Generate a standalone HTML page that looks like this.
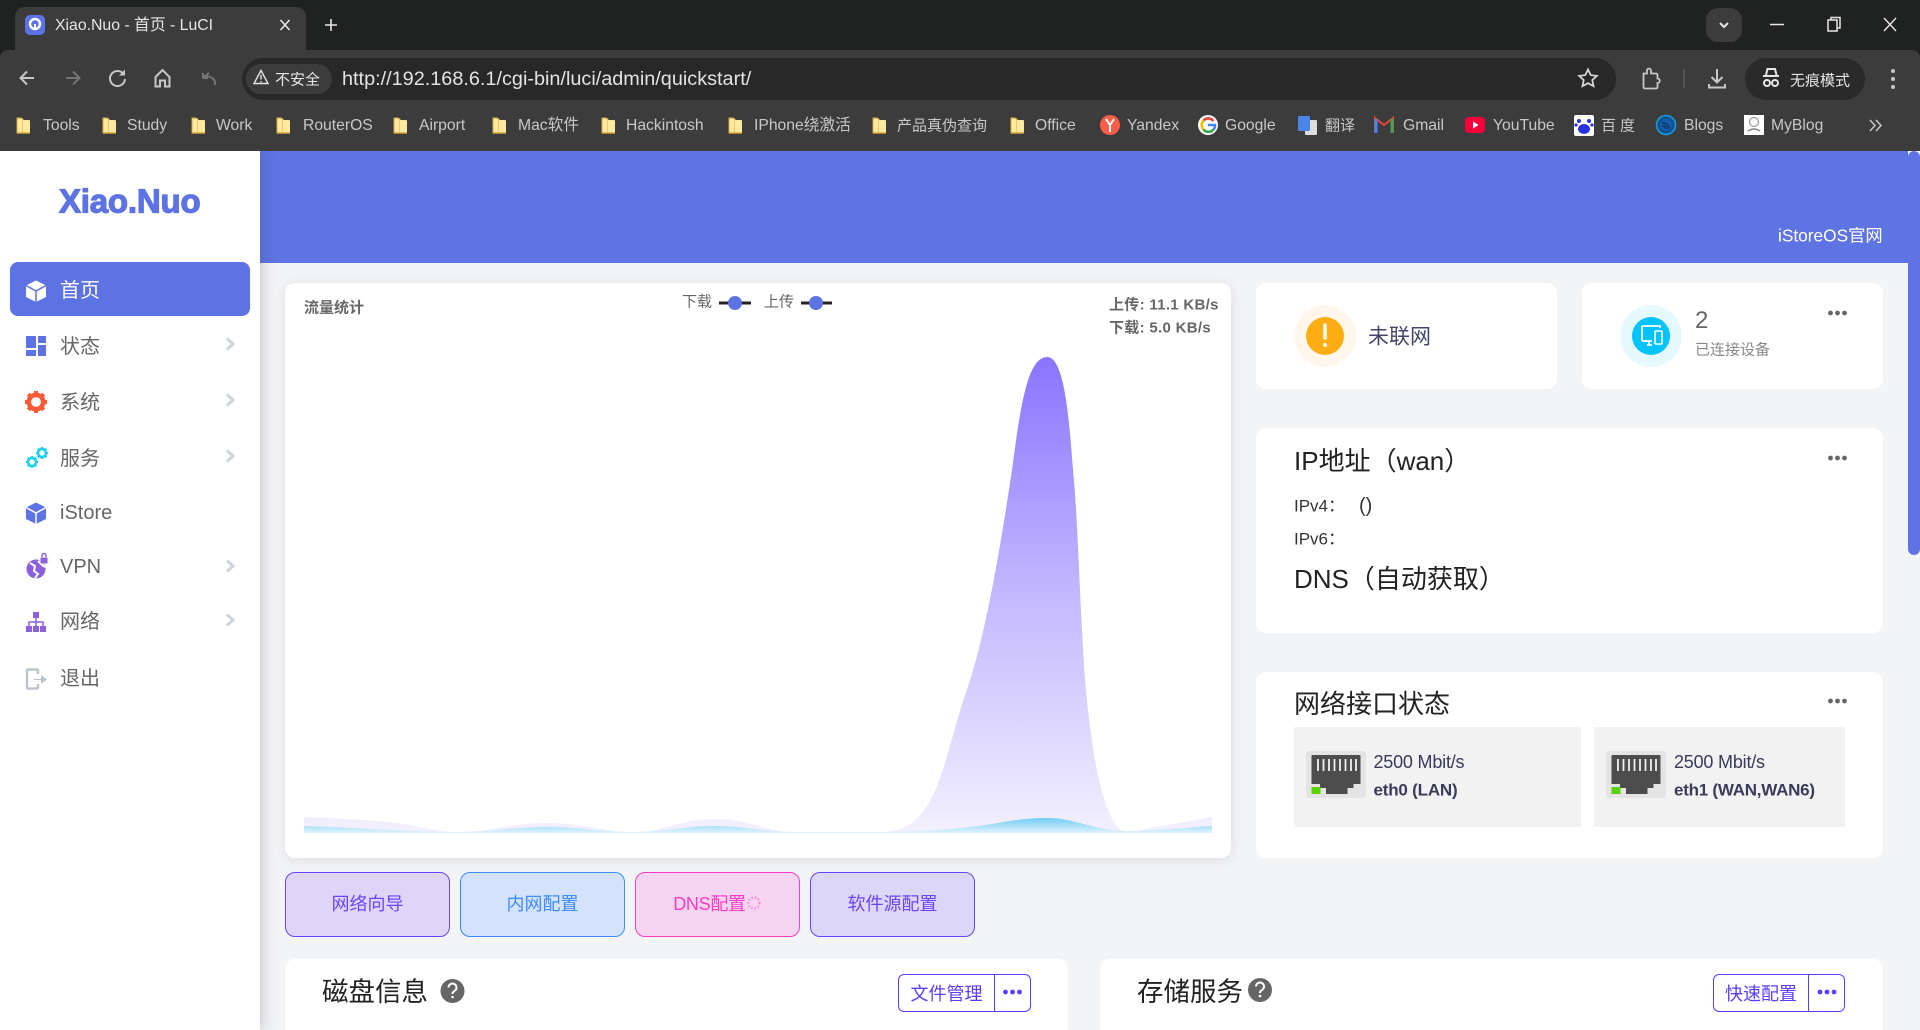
<!DOCTYPE html>
<html lang="zh"><head><meta charset="utf-8"><title>Xiao.Nuo - 首页 - LuCI</title>
<style>
*{box-sizing:border-box;margin:0;padding:0}
html,body{width:1920px;height:1030px;overflow:hidden;background:#f3f4f6;font-family:"Liberation Sans","Noto Sans CJK SC",sans-serif}
#root{position:relative;width:1920px;height:1030px;overflow:hidden}
.a{position:absolute}
.t{position:absolute;white-space:nowrap;line-height:1;transform:translateY(-50%)}
.card{position:absolute;background:#fff;border-radius:10px}
.bm{color:#c8c8c8;font-size:15.7px;top:126px}
.nav{font-size:20px;color:#666;left:60px}
.h{font-size:26px;color:#222}
.btn{position:absolute;top:872px;height:65px;width:165px;border-radius:10px;border:1px solid;font-size:18px;display:flex;align-items:center;justify-content:center;padding-bottom:4px}
.sb{position:absolute;top:974px;height:38px;border:1px solid #5c3dff;border-radius:6px;background:#fff;color:#5c3dff;font-size:18px;display:flex}
.sb span{display:flex;align-items:center;justify-content:center}
</style></head><body><div id="root">
<!-- browser chrome -->
<div class="a" style="left:0;top:0;width:1920px;height:151px;background:#202221"></div>
<div class="a" style="left:0;top:50px;width:1920px;height:101px;background:#3c3c3c;border-radius:8px 8px 0 0"></div>
<div class="a" style="left:15px;top:7px;width:291px;height:44px;background:#3c3c3c;border-radius:10px 10px 0 0"></div>
<div class="a" style="left:1706px;top:8px;width:36px;height:34px;background:#3c3c3c;border-radius:12px"></div>
<div class="a" style="left:242px;top:58px;width:1374px;height:42px;background:#282828;border-radius:21px"></div>
<div class="a" style="left:246px;top:64px;width:86px;height:30px;background:#3c3c3c;border-radius:15px"></div>
<div class="a" style="left:1745px;top:58px;width:120px;height:42px;background:#2a2a2a;border-radius:21px"></div>
<div class="t" style="left:55px;top:26px;font-size:15.8px;color:#e6e6e6">Xiao.Nuo - 首页 - LuCI</div>
<div class="t" style="left:275px;top:80px;font-size:15px;color:#e6e6e6">不安全</div>
<div class="t" style="left:342px;top:80px;font-size:19.85px;color:#e3e3e3">http://192.168.6.1/cgi-bin/luci/admin/quickstart/</div>
<div class="t" style="left:1790px;top:81px;font-size:15px;color:#e6e6e6">无痕模式</div>
<div class="t bm" style="left:43px">Tools</div><div class="t bm" style="left:127px">Study</div><div class="t bm" style="left:216px">Work</div>
<div class="t bm" style="left:303px">RouterOS</div><div class="t bm" style="left:419px">Airport</div><div class="t bm" style="left:518px">Mac软件</div>
<div class="t bm" style="left:626px">Hackintosh</div><div class="t bm" style="left:754px">IPhone绕激活</div><div class="t bm" style="left:897px;font-size:15px">产品真伪查询</div>
<div class="t bm" style="left:1035px">Office</div><div class="t bm" style="left:1127px">Yandex</div><div class="t bm" style="left:1225px">Google</div>
<div class="t bm" style="left:1325px;font-size:15px">翻译</div><div class="t bm" style="left:1403px">Gmail</div><div class="t bm" style="left:1493px">YouTube</div>
<div class="t bm" style="left:1601px;letter-spacing:4px;font-size:15px">百度</div><div class="t bm" style="left:1684px">Blogs</div><div class="t bm" style="left:1771px">MyBlog</div>

<!-- page -->
<div class="a" style="left:260px;top:151px;width:1660px;height:112px;background:#5f74e3"></div>
<div class="a" style="left:1908px;top:151px;width:12px;height:6px;background:#fff"></div>
<div class="a" style="left:1908px;top:151px;width:12px;height:404px;background:#5f74e2;border-radius:6px"></div>
<div class="a" style="left:0;top:151px;width:260px;height:879px;background:#fff;box-shadow:2px 0 14px rgba(60,65,80,.25)"></div>
<div class="t" style="left:59px;top:201px;font-size:33px;font-weight:bold;color:#5d73e3;letter-spacing:-.2px;-webkit-text-stroke:1.2px #5d73e3">Xiao.Nuo</div>
<div class="a" style="left:10px;top:262px;width:240px;height:54px;background:#5d73e3;border-radius:8px"></div>
<div class="t nav" style="top:291px;color:#fff">首页</div>
<div class="t nav" style="top:347px">状态</div>
<div class="t nav" style="top:403px">系统</div>
<div class="t nav" style="top:459px">服务</div>
<div class="t nav" style="top:513px">iStore</div>
<div class="t nav" style="top:567px">VPN</div>
<div class="t nav" style="top:622px">网络</div>
<div class="t nav" style="top:679px">退出</div>
<div class="t" style="left:1778px;top:236px;font-size:17.3px;color:#fff">iStoreOS官网</div>

<div class="card" style="left:285px;top:283px;width:946px;height:575px;box-shadow:0 2px 12px rgba(60,65,90,.12)"></div>
<div class="t" style="left:304px;top:308px;font-size:15px;font-weight:bold;color:#666">流量统计</div>
<div class="t" style="left:682px;top:302px;font-size:15px;color:#666">下载</div>
<div class="t" style="left:764px;top:302px;font-size:15px;color:#666">上传</div>
<div class="t" style="left:1109px;top:305px;font-size:15px;font-weight:bold;color:#666;letter-spacing:.3px">上传: 11.1 KB/s</div>
<div class="t" style="left:1109px;top:328px;font-size:15px;font-weight:bold;color:#666;letter-spacing:.3px">下载: 5.0 KB/s</div>

<div class="card" style="left:1256px;top:283px;width:301px;height:106px"></div>
<div class="card" style="left:1582px;top:283px;width:301px;height:106px"></div>
<div class="t" style="left:1368px;top:337px;font-size:21px;color:#45456a">未联网</div>
<div class="t" style="left:1695px;top:321px;font-size:24px;color:#666">2</div>
<div class="t" style="left:1695px;top:350px;font-size:15px;color:#888">已连接设备</div>

<div class="card" style="left:1256px;top:428px;width:627px;height:205px"></div>
<div class="t h" style="left:1294px;top:461px">IP地址（wan）</div>
<div class="t" style="left:1294px;top:506px;font-size:17px;color:#333">IPv4：</div>
<div class="t" style="left:1359px;top:506px;font-size:20px;color:#333">()</div>
<div class="t" style="left:1294px;top:539px;font-size:17px;color:#333">IPv6：</div>
<div class="t h" style="left:1294px;top:579px">DNS（自动获取）</div>

<div class="card" style="left:1256px;top:672px;width:627px;height:186px"></div>
<div class="t h" style="left:1294px;top:704px">网络接口状态</div>
<div class="a" style="left:1294px;top:727px;width:287px;height:100px;background:#f2f2f2"></div>
<div class="a" style="left:1594px;top:727px;width:251px;height:100px;background:#f2f2f2"></div>
<div class="t" style="left:1373.5px;top:762px;font-size:18px;color:#3a3a5a;letter-spacing:-.2px">2500 Mbit/s</div>
<div class="t" style="left:1373.5px;top:790px;font-size:17px;font-weight:bold;color:#3a3a5a;letter-spacing:-.2px">eth0 (LAN)</div>
<div class="t" style="left:1674px;top:762px;font-size:18px;color:#3a3a5a;letter-spacing:-.2px">2500 Mbit/s</div>
<div class="t" style="left:1674px;top:790px;font-size:17px;font-weight:bold;color:#3a3a5a;letter-spacing:-.25px">eth1 (WAN,WAN6)</div>

<div class="btn" style="left:285px;background:#ded6f9;border-color:#6a44ff;color:#6a44ff">网络向导</div>
<div class="btn" style="left:460px;background:#d4e3fb;border-color:#3d8bff;color:#3d8bff">内网配置</div>
<div class="btn" style="left:635px;background:#f6d5f0;border-color:#ff3bc6;color:#ff3bc6;padding-right:16px;letter-spacing:-.3px">DNS配置</div>
<div class="btn" style="left:810px;background:#dcd6f8;border-color:#6a44ff;color:#6a44ff">软件源配置</div>

<div class="card" style="left:285px;top:959px;width:783px;height:90px"></div>
<div class="card" style="left:1100px;top:959px;width:783px;height:90px"></div>
<div class="t h" style="left:322px;top:992px;font-size:26.5px">磁盘信息</div>
<div class="t h" style="left:1137px;top:992px;font-size:26.5px">存储服务</div>
<div class="sb" style="left:898px;width:133px"><span style="width:96px;border-right:1px solid #5c3dff">文件管理</span></div>
<div class="sb" style="left:1713px;width:132px"><span style="width:95px;border-right:1px solid #5c3dff">快速配置</span></div>

<!-- icons and shapes -->
<svg class="a" style="left:0;top:0" width="1920" height="1030" viewBox="0 0 1920 1030" fill="none">
<defs>
<linearGradient id="pg" gradientUnits="userSpaceOnUse" x1="0" y1="357" x2="0" y2="833"><stop offset="0" stop-color="#8a74ff"/><stop offset=".5" stop-color="#c3b8ff"/><stop offset="1" stop-color="#f3f0fe"/></linearGradient>
<linearGradient id="bg" gradientUnits="userSpaceOnUse" x1="0" y1="818" x2="0" y2="833"><stop offset="0" stop-color="#6fcdf5"/><stop offset="1" stop-color="#e0f2fe"/></linearGradient>
<g id="fold"><path d="M0 1h4l2 1v14H0z" fill="#ffe9a0" stroke="#d8a93a"/><path d="M6 3h6a1 1 0 0 1 1 1v12H6z" fill="#ffe9a0"/><path d="M0 16h13" stroke="#d8a93a" stroke-width="1.4"/></g>
<g id="chev"><path d="M-3 -5.5 3 0-3 5.5" stroke="#ced4da" stroke-width="3"/></g>
<g id="dots"><circle cx="-7" cy="0" r="2.4"/><circle cx="0" cy="0" r="2.4"/><circle cx="7" cy="0" r="2.4"/></g>
<g id="gear"><circle r="7.2" stroke-width="4.6"/><path d="M0 -11V-8M0 8V11M-11 0H-8M8 0H11M-7.8 -7.8-5.7 -5.7M7.8 7.8 5.700 5.700M7.8 -7.800 5.700 -5.700M-7.800 7.800-5.700 5.700" stroke-width="4"/></g>
<g id="cube"><path d="M0 -10.5 10 -5.5V6L0 11-10 6V-5.500z"/></g>
<g id="rj"><rect x="0" y="0" width="60" height="47" rx="3" fill="#e4e4e4"/><path d="M5.5 5a1 1 0 0 1 1-1h47a1 1 0 0 1 1 1v28h-7v4h-6v6H20v-6h-6v-4H5.500z" fill="#4d4d4d"/><path d="M12 8v12M17.500 8v12M23 8v12M28.500 8v12M34 8v12M39.500 8v12M45 8v12M50 8v12" stroke="#f0f0f0" stroke-width="1.800"/><rect x="5.500" y="36" width="9" height="7" fill="#5ad300"/></g>
</defs>
<!-- tab -->
<rect x="25" y="15" width="20" height="20" rx="5" fill="#5c73e7"/><circle cx="35" cy="24" r="5" stroke="#fff" stroke-width="2.400"/><path d="M35 24v6" stroke="#fff" stroke-width="2"/>
<path d="M280.500 20l9 10M289.500 20l-9 10M331 19v12M325 25h12" stroke="#e6e6e6" stroke-width="1.600"/>
<path d="M1720 23l4 4 4-4" stroke="#e6e6e6" stroke-width="2"/>
<path d="M1770 24.500h14" stroke="#e6e6e6" stroke-width="1.500"/>
<path d="M1828 20h9v11h-9zM1831 20v-2.500h9v10.500h-3" stroke="#e6e6e6" stroke-width="1.500"/>
<path d="M1884 18l12 13M1896 18l-12 13" stroke="#e6e6e6" stroke-width="1.400"/>
<!-- toolbar -->
<path d="M34 78H21M27 71.500 20.500 78l6.500 6.500" stroke="#c7c7c7" stroke-width="2"/>
<path d="M66 78h13M73 71.500l6.500 6.500-6.500 6.500" stroke="#757575" stroke-width="2"/>
<path d="M123.500 74a7.500 7.500 0 1 0 1.500 5" stroke="#c7c7c7" stroke-width="2"/><path d="M125 69.500v6h-6z" fill="#c7c7c7"/>
<path d="M155.500 77l7-7 7 7v9.500h-4.500v-6h-5v6h-4.500z" stroke="#c7c7c7" stroke-width="2"/>
<path d="M203 78l6-5M203 78h5M203 78v-5M204 78a7 7 0 0 1 11 7" stroke="#757575" stroke-width="2"/>
<path d="M261 70.500l7 13h-14zM261 75v4.500M261 81v1.200" stroke="#e6e6e6" stroke-width="1.400"/>
<path d="M1588 69.500l2.700 5.600 6.100.8-4.500 4.200 1.200 6.100-5.500-3-5.500 3 1.200-6.100-4.500-4.200 6.100-.8z" stroke="#d4d4d4" stroke-width="1.800"/>
<path d="M1643.500 73.500h3.500v-3a2 2 0 0 1 4 0v3h5a1.500 1.500 0 0 1 1.500 1.500v3.500a2 2 0 0 1 0 4.500v4a1.500 1.500 0 0 1-1.500 1.500h-11a1.500 1.500 0 0 1-1.500-1.500z" stroke="#c7c7c7" stroke-width="1.800"/>
<path d="M1684 69v19" stroke="#5a5a5a" stroke-width="1.500"/>
<path d="M1717 69v13M1711.500 77l5.500 5.500 5.500-5.500M1709 84v3.500h16V84" stroke="#c7c7c7" stroke-width="2"/>
<path d="M1763 76h16M1766 75l1.500-6h7.500l1.500 6" stroke="#e6e6e6" stroke-width="2"/><circle cx="1767" cy="83" r="3" stroke="#e6e6e6" stroke-width="2"/><circle cx="1775" cy="83" r="3" stroke="#e6e6e6" stroke-width="2"/>
<circle cx="1893" cy="71" r="2" fill="#c7c7c7"/><circle cx="1893" cy="79" r="2" fill="#c7c7c7"/><circle cx="1893" cy="87" r="2" fill="#c7c7c7"/>
<!-- bookmarks -->
<use href="#fold" x="17" y="117"/><use href="#fold" x="103" y="117"/><use href="#fold" x="192" y="117"/><use href="#fold" x="277" y="117"/><use href="#fold" x="394" y="117"/><use href="#fold" x="493" y="117"/><use href="#fold" x="602" y="117"/><use href="#fold" x="729" y="117"/><use href="#fold" x="873" y="117"/><use href="#fold" x="1011" y="117"/>
<circle cx="1110" cy="125" r="10" fill="#fc5d49"/><path d="M1106 119l4 6 4-6M1110 125v7" stroke="#fff" stroke-width="2"/>
<circle cx="1208" cy="125" r="10" fill="#fff"/><path d="M1213.500 121a6.500 6.500 0 0 0-10-.5" stroke="#ea4335" stroke-width="2.600"/><path d="M1203.500 120.500a6.500 6.500 0 0 0 0 9" stroke="#fbbc05" stroke-width="2.600"/><path d="M1203.500 129.500a6.500 6.500 0 0 0 10 0" stroke="#34a853" stroke-width="2.600"/><path d="M1208 125h7a6.500 6.500 0 0 1-1.500 4.500" stroke="#4285f4" stroke-width="2.600"/>
<rect x="1305" y="120" width="12" height="15" rx="1" fill="#ddd"/><rect x="1298" y="116" width="12" height="15" rx="1" fill="#4a86e8"/>
<path d="M1375 133v-15l9 7 9-7v15" stroke="#ea4335" stroke-width="2"/><path d="M1376 133v-14" stroke="#4285f4" stroke-width="3"/><path d="M1392 133v-14" stroke="#34a853" stroke-width="3"/>
<rect x="1465" y="117" width="20" height="16" rx="4" fill="#f8003a"/><path d="M1473 121.500l5.500 3.500-5.500 3.500z" fill="#fff"/>
<rect x="1574" y="115" width="20" height="21" rx="2" fill="#fff"/><ellipse cx="1584" cy="129" rx="6" ry="5" fill="#2932e1"/><circle cx="1579" cy="121" r="2" fill="#2932e1"/><circle cx="1589" cy="121" r="2" fill="#2932e1"/><circle cx="1576" cy="125" r="1.600" fill="#2932e1"/><circle cx="1592" cy="125" r="1.600" fill="#2932e1"/>
<circle cx="1666" cy="125" r="9.500" stroke="#16a0e0" stroke-width="1.500" fill="#14508c"/><circle cx="1666" cy="125" r="6" fill="#0f5fb0"/><path d="M1662 123a6 6 0 0 1 7 6M1662 126a3 3 0 0 1 4 3" stroke="#1a2c55" stroke-width="1.400"/>
<rect x="1744" y="115" width="20" height="20" fill="#fff"/><circle cx="1754" cy="122" r="4.500" stroke="#999" stroke-width="1.200"/><path d="M1748 131q6-4 12 0" stroke="#888" stroke-width="1.500"/>
<path d="M1870 120l5 5.500-5 5.500M1876 120l5 5.500-5 5.500" stroke="#c7c7c7" stroke-width="1.500"/>
<!-- sidebar icons -->
<g transform="translate(36 291)"><use href="#cube" fill="#fff"/><path d="M-10 -5.500 0 0 10 -5.500M0 0V11" stroke="#5d73e3" stroke-width="1.500"/></g>
<g fill="#5d73e3"><rect x="26" y="336" width="10" height="12"/><rect x="38" y="336" width="8" height="7"/><rect x="26" y="350" width="10" height="6"/><rect x="38" y="345" width="8" height="11"/></g>
<g transform="translate(36 402)" stroke="#ff5a36"><use href="#gear"/></g>
<g transform="translate(32 462) scale(.55)" stroke="#1cd0ee"><use href="#gear"/></g>
<g transform="translate(42 453) scale(.55)" stroke="#1cd0ee"><use href="#gear"/></g>
<g transform="translate(36 513)"><use href="#cube" fill="#5d73e3"/><path d="M-10 -5.500 0 0 10 -5.500M0 0V11" stroke="#fff" stroke-width="1.500"/></g>
<circle cx="36" cy="569" r="9.500" fill="#8b60dd"/><path d="M30 563l5 3-1 5 4 3-3 4M38 561l4 4 3 2" stroke="#fff" stroke-width="2"/><rect x="40" y="557" width="8" height="7" rx="1" fill="#8b60dd" stroke="#fff"/><path d="M42 557v-1.500a2 2 0 0 1 4 0V557" stroke="#8b60dd" stroke-width="1.500"/>
<g fill="#8b60dd"><rect x="33" y="612" width="6" height="6"/><rect x="26" y="626" width="6" height="6"/><rect x="33" y="626" width="6" height="6"/><rect x="40" y="626" width="6" height="6"/></g><path d="M36 618v8M29 626v-4h14v4" stroke="#8b60dd" stroke-width="1.500"/>
<path d="M38 674v-3.500a1 1 0 0 0-1-1H28a1 1 0 0 0-1 1v17a1 1 0 0 0 1 1h9a1 1 0 0 0 1-1V684" stroke="#bcc3cb" stroke-width="2.400"/><path d="M34 679h7v-4l6 4.500-6 4.500v-4h-7z" fill="#bcc3cb"/>
<use href="#chev" x="230" y="344"/><use href="#chev" x="230" y="400"/><use href="#chev" x="230" y="456"/><use href="#chev" x="230" y="566"/><use href="#chev" x="230" y="620"/>
<!-- chart -->
<path d="M304 817C350 819 395 821 420 827C435 830 445 832 460 832C490 832 510 823 547 823C585 823 600 832 634 832C665 832 680 819 715 819C750 819 765 832 795 832L880 832C905 832 920 822 933 795C945 770 952 735 965 695C985 640 1000 550 1012 470C1020 410 1027 357 1047 357C1062 357 1068 400 1073 470C1078 520 1080 610 1085 680C1092 760 1105 832 1128 832L1212 817L1212 833L304 833Z" fill="url(#pg)"/>
<path d="M304 826C380 829 420 832 460 832C490 832 515 827 547 827C580 827 600 832 634 832C665 832 685 826 715 826C745 826 765 832 795 832L880 832C930 832 960 828 980 826C1000 823 1020 818 1047 818C1075 818 1095 831 1128 831C1160 831 1190 827 1212 826L1212 833L304 833Z" fill="url(#bg)"/>
<path d="M719 303h32M801 303h31" stroke="#222" stroke-width="3"/><circle cx="735" cy="303" r="7" fill="#5d73e3"/><circle cx="816" cy="303" r="7" fill="#5d73e3"/>
<!-- status circles -->
<circle cx="1325" cy="336" r="31" fill="#fff7ec"/><circle cx="1325" cy="336" r="19" fill="#ffad14"/><path d="M1325 325v13" stroke="#fff" stroke-width="3.500" stroke-linecap="round"/><circle cx="1325" cy="345" r="2" fill="#fff"/>
<circle cx="1651" cy="336" r="31" fill="#e6f9ff"/><circle cx="1651" cy="336" r="19" fill="#00c3ff"/>
<path d="M1660 328v-2h-17a1 1 0 0 0-1 1v13a1 1 0 0 0 1 1h9M1647 345h5M1649 341v4" stroke="#fff" stroke-width="1.800"/><rect x="1655" y="331" width="7" height="13" rx="1" stroke="#fff" stroke-width="1.600"/>
<g fill="#666"><use href="#dots" x="1837.500" y="313"/><use href="#dots" x="1837.500" y="458"/><use href="#dots" x="1837.500" y="701"/></g>
<use href="#rj" x="1306" y="751"/><use href="#rj" x="1606" y="751"/>
<!-- spinner -->
<circle cx="754" cy="903" r="5.500" stroke="#ff8fdc" stroke-width="2.500" stroke-dasharray="1.500 1.800"/>
<!-- help -->
<circle cx="452.500" cy="991" r="12" fill="#666"/><circle cx="1260" cy="990" r="12" fill="#666"/>
<path d="M448.500 987.500a4 4 0 1 1 6 3.500q-2 1-2 3M1256 986.500a4 4 0 1 1 6 3.500q-2 1-2 3" stroke="#fff" stroke-width="2"/><circle cx="452.500" cy="997" r="1.300" fill="#fff"/><circle cx="1260" cy="996" r="1.300" fill="#fff"/>
<g fill="#5c3dff"><use href="#dots" x="1012.500" y="992"/><use href="#dots" x="1827" y="992"/></g>
</svg>
</div></body></html>
